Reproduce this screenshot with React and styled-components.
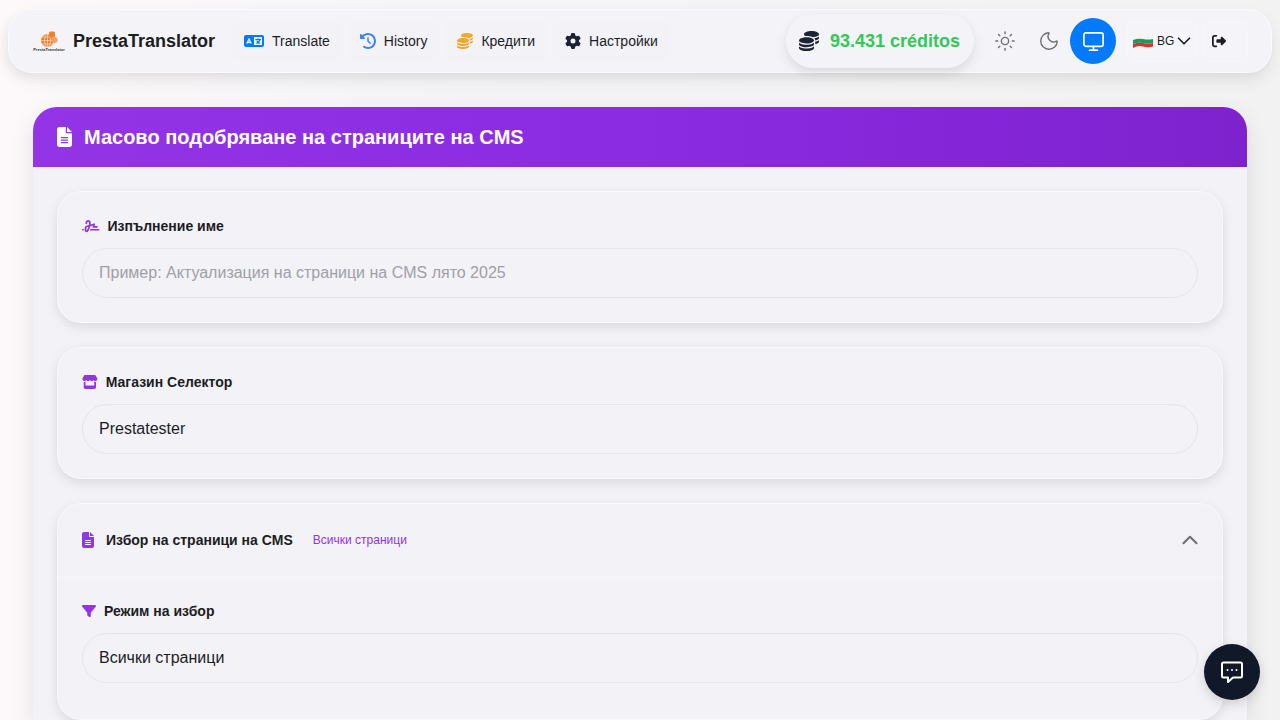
import React from "react";
import styled, { createGlobalStyle } from "styled-components";
import { FaLanguage, FaClockRotateLeft, FaCoins, FaGear, FaRightFromBracket, FaFileLines, FaSignature, FaStore, FaFilter } from "react-icons/fa6";
import { Sun, Moon, Monitor, ChevronDown, ChevronUp } from "lucide-react";

const GlobalStyle = createGlobalStyle`
    html, body {
        margin: 0;
        height: 720px;
        overflow: hidden;
    }
    body {
        font-family: "Liberation Sans", Arial, sans-serif;
        color: #1d1d1f;
        background: linear-gradient(90deg, #fdf9fa 0%, #f5f5f7 30%, #f2f2f3 100%);
    }
`

const Page = styled.div`
    height: 720px;
    overflow: hidden;
`

const Navbar = styled.nav`
    display: flex;
    align-items: center;
    height: 64px;
    margin: 9px 8px 0;
    padding: 0 23px 0 24px;
    border-radius: 24px;
    background: #f3f3f8;
    border: 1px solid rgba(255, 255, 255, 0.6);
    box-sizing: border-box;
    box-shadow: 0 8px 16px rgba(0, 0, 0, 0.07), -4px 4px 10px rgba(0, 0, 0, 0.03);
`

const Brand = styled.div`
    display: flex;
    align-items: center;
    gap: 8px;
    width: 199px;
    font-size: 18px;
    font-weight: 700;
    color: #1d1d1f;
`

const LogoWrap = styled.div`
    display: flex;
    flex-direction: column;
    align-items: center;
    width: 32px;
`

const LogoText = styled.span`
    font-size: 4px;
    line-height: 4px;
    font-weight: 700;
    color: #333;
    white-space: nowrap;
`

const NavLinks = styled.div`
    display: flex;
    gap: 6px;
`

const NavLink = styled.a`
    display: flex;
    align-items: center;
    gap: 8px;
    height: 40px;
    padding: 0 12px;
    border-radius: 8px;
    font-size: 14px;
    color: #1d1d1f;
    background: #f2f2f7;
    svg {
        width: ${({ $w }) => $w || 16}px;
        height: 16px;
        color: ${({ $icon }) => $icon};
    }
`

const NavRight = styled.div`
    display: flex;
    align-items: center;
    margin-left: auto;
`

const CreditsPill = styled.div`
    display: flex;
    align-items: center;
    gap: 11px;
    width: 188px;
    height: 54px;
    padding-left: 13px;
    box-sizing: border-box;
    border-radius: 27px;
    background: #f3f3f8;
    box-shadow: 0 5px 12px rgba(0, 0, 0, 0.1);
    font-size: 18px;
    font-weight: 700;
    color: #34c759;
    svg {
        color: #1c2433;
        font-size: 20px;
    }
`

const ThemeGroup = styled.div`
    display: flex;
    align-items: center;
    margin-left: 9px;
`

const ThemeButton = styled.button`
    display: flex;
    align-items: center;
    justify-content: center;
    width: ${({ $active }) => ($active ? "46px" : "44px")};
    height: 46px;
    margin-left: ${({ $active }) => ($active ? "-1px" : "0")};
    padding: 0;
    border: none;
    border-radius: 50%;
    background: ${({ $active }) => ($active ? "#007aff" : "transparent")};
    color: ${({ $active }) => ($active ? "#fff" : "#6e6e73")};
`

const LangButton = styled.div`
    display: flex;
    align-items: center;
    gap: 4px;
    width: 72px;
    height: 42px;
    margin-left: 10px;
    padding-left: 6px;
    box-sizing: border-box;
    border: 1px solid #f7f7fb;
    border-radius: 6px;
    font-size: 12px;
    color: #1d1d1f;
    background: #f4f4f9;
    svg:last-child {
        margin-left: -5px;
    }
`

const LogoutButton = styled.div`
    display: flex;
    align-items: center;
    justify-content: center;
    width: 46px;
    height: 42px;
    margin-left: 4px;
    padding-right: 12px;
    box-sizing: border-box;
    border: 1px solid #f7f7fb;
    border-radius: 6px;
    background: #f4f4f9;
    color: #1d1d1f;
    font-size: 14px;
`

const Main = styled.main`
    margin: 34px 33px 0;
    border-radius: 24px 24px 0 0;
    background: #f2f2f7;
    box-shadow: 0 8px 24px rgba(0, 0, 0, 0.1);
`

const MainHeader = styled.header`
    display: flex;
    align-items: center;
    gap: 12px;
    height: 60px;
    padding: 0 24px;
    border-radius: 24px 24px 0 0;
    background: linear-gradient(90deg, #9334e6 0%, #8b2be2 50%, #7e22ce 100%);
    color: #fff;
    font-size: 20px;
    font-weight: 700;
    svg {
        width: 15px;
        height: 20px;
    }
`

const MainBody = styled.div`
    display: flex;
    flex-direction: column;
    gap: 24px;
    padding: 24px 24px 0;
`

const Card = styled.section`
    padding: ${({ $flush }) => ($flush ? "0" : "24px")};
    border-radius: 24px;
    background: #f2f2f7;
    border: 1px solid rgba(255, 255, 255, 0.55);
    box-sizing: border-box;
    box-shadow: 0 4px 12px rgba(0, 0, 0, 0.1);
`

const Label = styled.div`
    display: flex;
    align-items: center;
    gap: 8px;
    height: 20px;
    margin-bottom: 12px;
    font-size: 14px;
    font-weight: 700;
    color: #1d1d1f;
    svg {
        width: ${({ $w }) => $w}px;
        height: 14px;
        color: #9334e6;
    }
`

const Field = styled.div`
    display: flex;
    align-items: center;
    height: 50px;
    padding: 0 16px;
    box-sizing: border-box;
    border: 1px solid #e5e5ea;
    border-radius: 25px;
    background: #f2f2f7;
    font-size: 16px;
    color: ${({ $placeholder }) => ($placeholder ? "#a0a0a6" : "#1d1d1f")};
`

const CardHeader = styled.div`
    display: flex;
    align-items: center;
    height: 74px;
    padding: 0 24px 2px;
    box-sizing: border-box;
    border-bottom: 1px solid #f7f7fb;
    font-size: 14px;
    font-weight: 700;
`

const HeaderIcon = styled.span`
    display: flex;
    width: 24px;
    color: #9334e6;
    svg {
        width: 12px;
        height: 16px;
    }
`

const Badge = styled.span`
    margin-left: 20px;
    font-size: 12px;
    font-weight: 400;
    color: #9334e6;
`

const Collapse = styled.span`
    display: flex;
    margin-left: auto;
    margin-right: -5px;
    color: #6e6e73;
`

const CardContent = styled.div`
    padding: 23px 24px 36px;
`

const ChatButton = styled.button`
    position: fixed;
    right: 20px;
    bottom: 20px;
    display: flex;
    align-items: center;
    justify-content: center;
    width: 56px;
    height: 56px;
    padding: 0;
    border: none;
    border-radius: 50%;
    background: #111827;
    box-shadow: 0 4px 12px rgba(0, 0, 0, 0.15);
`

const LogoIcon = () => (
    <svg width="18" height="17" viewBox="0 0 18 17">
        <circle cx="7.5" cy="9.5" r="6.5" fill="#ee8030" />
        <g stroke="#fbeadb" strokeWidth="0.6" fill="none">
            <ellipse cx="7.5" cy="9.5" rx="3" ry="6.5" />
            <path d="M1 9.5h13M2 6h11M2 13h11M7.5 3v13" />
        </g>
        <rect x="9" y="0.5" width="6" height="6" rx="1.5" fill="#ee8030" />
        <circle cx="14.5" cy="9" r="3" fill="#f2a266" />
    </svg>
)

const FlagIcon = () => (
    <svg width="20" height="14" viewBox="0 0 20 14">
        <path d="M0 2 Q5 0 10 1.5 T20 1V5 Q15 6 10 5 T0 6Z" fill="#f4f4f4" />
        <path d="M0 6 Q5 4 10 5 T20 5V9 Q15 10 10 9 T0 10Z" fill="#1f9a5c" />
        <path d="M0 10 Q5 8 10 9 T20 9V12.5 Q15 14 10 12.5 T0 14Z" fill="#d8342c" />
    </svg>
)

const ChatIcon = () => (
    <svg width="24" height="24" viewBox="0 0 24 24" fill="none" stroke="#fff" strokeWidth="2" strokeLinejoin="round">
        <path d="M3.5 2.5h17a1.5 1.5 0 0 1 1.5 1.5v12a1.5 1.5 0 0 1-1.5 1.5H13L8 22v-4.500H3.500A1.500 1.500 0 0 1 2 16V4a1.500 1.500 0 0 1 1.500-1.500z" />
        <circle cx="7.500" cy="10" r="1" fill="#fff" stroke="none" />
        <circle cx="12" cy="10" r="1" fill="#fff" stroke="none" />
        <circle cx="16.500" cy="10" r="1" fill="#fff" stroke="none" />
    </svg>
)

const App = () => {
    return (
        <Page>
            <GlobalStyle />
            <Navbar>
                <Brand>
                    <LogoWrap>
                        <LogoIcon />
                        <LogoText>PrestaTranslator</LogoText>
                    </LogoWrap>
                    PrestaTranslator
                </Brand>
                <NavLinks>
                    <NavLink $icon="#007aff" $w={20}><FaLanguage />Translate</NavLink>
                    <NavLink $icon="#3b82f6"><FaClockRotateLeft />History</NavLink>
                    <NavLink $icon="#f5a623"><FaCoins />Кредити</NavLink>
                    <NavLink $icon="#1c2433"><FaGear />Настройки</NavLink>
                </NavLinks>
                <NavRight>
                    <CreditsPill><FaCoins />93.431 créditos</CreditsPill>
                    <ThemeGroup>
                        <ThemeButton><Sun size={22} strokeWidth={1.5} /></ThemeButton>
                        <ThemeButton><Moon size={22} strokeWidth={1.5} /></ThemeButton>
                        <ThemeButton $active><Monitor size={23} strokeWidth={1.8} /></ThemeButton>
                    </ThemeGroup>
                    <LangButton>
                        <FlagIcon />
                        BG
                        <ChevronDown size={22} strokeWidth={1.8} />
                    </LangButton>
                    <LogoutButton><FaRightFromBracket /></LogoutButton>
                </NavRight>
            </Navbar>
            <Main>
                <MainHeader>
                    <FaFileLines />
                    Масово подобряване на страниците на CMS
                </MainHeader>
                <MainBody>
                    <Card>
                        <Label $w={17.5}><FaSignature />Изпълнение име</Label>
                        <Field $placeholder>Пример: Актуализация на страници на CMS лято 2025</Field>
                    </Card>
                    <Card>
                        <Label $w={15.75}><FaStore />Магазин Селектор</Label>
                        <Field>Prestatester</Field>
                    </Card>
                    <Card $flush>
                        <CardHeader>
                            <HeaderIcon><FaFileLines /></HeaderIcon>
                            Избор на страници на CMS
                            <Badge>Всички страници</Badge>
                            <Collapse><ChevronUp size={26} strokeWidth={1.9} /></Collapse>
                        </CardHeader>
                        <CardContent>
                            <Label $w={14}><FaFilter />Режим на избор</Label>
                            <Field>Всички страници</Field>
                        </CardContent>
                    </Card>
                </MainBody>
            </Main>
            <ChatButton><ChatIcon /></ChatButton>
        </Page>
    )
}

export default App
